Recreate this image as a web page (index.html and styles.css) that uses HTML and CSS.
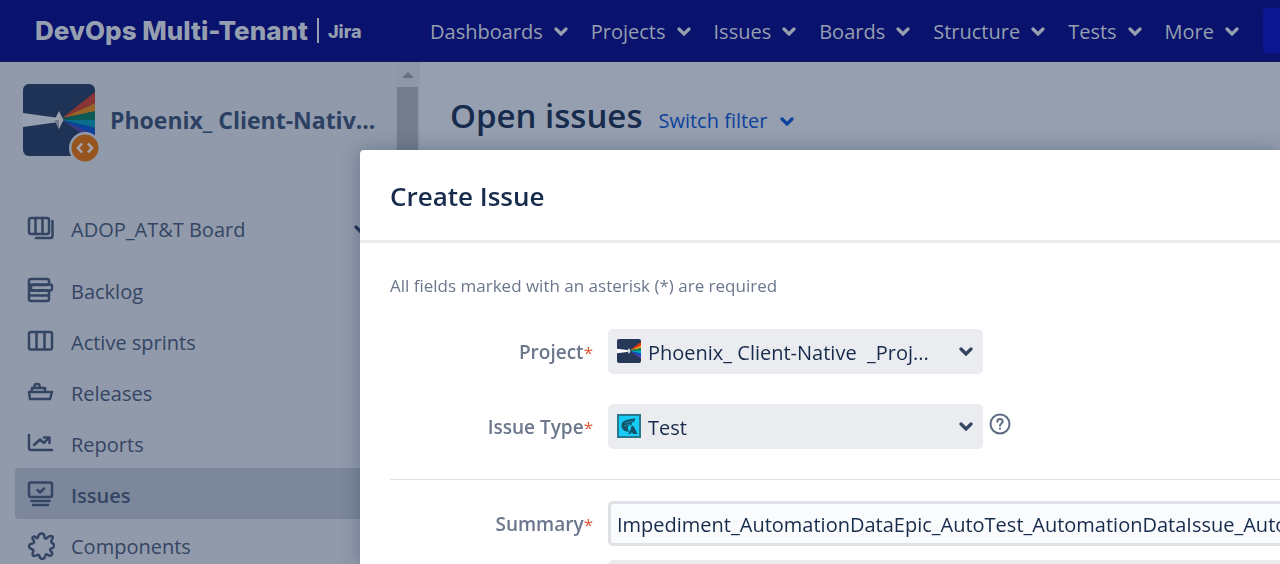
FILE: index.html
```html
<!DOCTYPE html>
<html lang="en">
<head>
<meta charset="utf-8">
<meta name="viewport" content="width=device-width, initial-scale=1">
<title>Create Issue - Jira</title>
<link rel="stylesheet" href="styles.css">
</head>
<body>
<svg class="defs" aria-hidden="true">
  <symbol id="chevron" viewBox="0 0 14 9"><path d="M2 2l5 5 5-5" fill="none" stroke="currentColor" stroke-width="3.200" stroke-linecap="round"/></symbol>
  <symbol id="prism" viewBox="0 0 72 72">
    <rect class="prism-bg" width="72" height="72" rx="6"/>
    <path class="prism-beam" d="M0 29l36 5v4L0 43z"/>
    <path class="prism-red" d="M39 34L72 8v12z"/>
    <path class="prism-orange" d="M39 34l33-14.500v8z"/>
    <path class="prism-green" d="M39 35l33-8v9H39z"/>
    <path class="prism-teal" d="M39 36h33v8z"/>
    <path class="prism-blue" d="M39 36l33 8v8z"/>
    <path class="prism-purple" d="M39 36l33 15v8z"/>
    <path class="prism-gem" d="M36 27l4.500 9-4.500 9-4.500-9z"/>
    <path class="prism-shade" d="M31.500 36H36v9z"/>
  </symbol>
</svg>

<header class="topbar">
  <a class="brand" href="#">
    <span class="brand-name">DevOps Multi-Tenant</span>
    <span class="brand-rule"></span>
    <span class="brand-product">Jira</span>
  </a>
  <nav class="topnav">
    <a href="#">Dashboards<svg class="chevron"><use href="#chevron"/></svg></a>
    <a href="#">Projects<svg class="chevron"><use href="#chevron"/></svg></a>
    <a href="#">Issues<svg class="chevron"><use href="#chevron"/></svg></a>
    <a href="#">Boards<svg class="chevron"><use href="#chevron"/></svg></a>
    <a href="#">Structure<svg class="chevron"><use href="#chevron"/></svg></a>
    <a href="#">Tests<svg class="chevron"><use href="#chevron"/></svg></a>
    <a href="#">More<svg class="chevron"><use href="#chevron"/></svg></a>
  </nav>
  <button class="create" type="button" aria-label="Create"></button>
</header>

<div class="layout">
  <aside class="sidebar">
    <div class="project">
      <div class="avatar">
        <svg class="avatar-img"><use href="#prism"/></svg>
        <svg class="avatar-badge" viewBox="0 0 32 32"><circle cx="16" cy="16" r="16" fill="#919aab"/><circle cx="16" cy="16" r="13.500" fill="#96551f"/><path d="M13 11.500L9 16l4 4.500M19 11.500l4 4.500-4 4.500" fill="none" stroke="#a2a5ae" stroke-width="2.600"/></svg>
      </div>
      <span class="project-name">Phoenix_ Client-Nativ...</span>
    </div>
    <nav class="sidenav">
      <a class="board" href="#">
        <svg class="icon" viewBox="0 0 28 28"><rect x="2" y="2" width="20" height="16" rx="2"/><path d="M8.500 2v16M15.500 2v16M25.500 5v15a2 2 0 0 1-2 2H9"/></svg>
        <span>ADOP_AT&amp;T Board</span>
        <svg class="chevron"><use href="#chevron"/></svg>
      </a>
      <a href="#">
        <svg class="icon" viewBox="0 0 28 28"><rect x="2" y="2" width="20" height="6" rx="2"/><rect x="4" y="7.500" width="21" height="6" rx="2"/><rect x="2" y="13.500" width="20" height="10.500" rx="2"/><path d="M2 7v6M2 18.500h20"/></svg>
        <span>Backlog</span>
      </a>
      <a href="#">
        <svg class="icon" viewBox="0 0 28 28"><rect x="2" y="4" width="23" height="17.500" rx="2"/><path d="M9.500 4v17M17.500 4v17"/></svg>
        <span>Active sprints</span>
      </a>
      <a href="#">
        <svg class="icon" viewBox="0 0 28 28"><path d="M2 13h23l-2 7H3zM5 13V9h13v4M7.500 9V7a2 2 0 0 1 2-2h1a2 2 0 0 1 2 2v2"/></svg>
        <span>Releases</span>
      </a>
      <a href="#">
        <svg class="icon" viewBox="0 0 28 28"><path d="M2 5v13a2 2 0 0 0 2 2h21M7 15l6-5.500 4 3.500 5-5.500M17 7.500h5.500V13"/></svg>
        <span>Reports</span>
      </a>
      <a class="selected" href="#">
        <svg class="icon" viewBox="0 0 28 28"><rect x="2" y="1.500" width="23" height="14.500" rx="2"/><path d="M10.500 9l2.500 2.500L17 7.500M4.500 20h18M6 24h15"/></svg>
        <span>Issues</span>
      </a>
      <a href="#">
        <svg class="icon" viewBox="0 0 28 28"><path d="M11 5C12 .5 17 .5 17.500 4.500C17.500 7 19 7.500 20.500 5.500C22 3.500 27 3 25.500 6.500C23.500 9 24 11 26 11.500C28 13 27 16.500 24 16.500C22.500 17.500 23.500 19 25 20.500C26 23.500 23 24.500 21 23C19 21.500 18.500 22.500 18 24.500C17 28 13.500 27.500 12.500 24.500C12 22 10.500 22.500 9 23.500C6 25 5 23 6 20C7 18 6 17.500 4.500 17C1 15.500 1.500 12 5 11.500C8 11 7.500 9.500 6 7.500C4.500 5 7 3.500 9 5.500C10 6.500 10.500 6.500 11 5z"/></svg>
        <span>Components</span>
      </a>
    </nav>
  </aside>
  <div class="scrollbar" aria-hidden="true"><span class="scroll-arrow"></span><span class="scroll-thumb"></span></div>
  <main class="content">
    <h1>Open issues</h1>
    <a class="switch" href="#">Switch filter<svg class="chevron"><use href="#chevron"/></svg></a>
  </main>
</div>

<div class="overlay">
  <section class="dialog" role="dialog" aria-labelledby="dialog-title">
    <header class="dialog-head"><h2 id="dialog-title">Create Issue</h2></header>
    <form class="form">
      <p class="note">All fields marked with an asterisk (*) are required</p>
      <div class="field">
        <label for="project">Project<span class="req">*</span></label>
        <div class="picker">
          <select id="project"><option>Phoenix_ Client-Native &nbsp;_Proj...</option></select>
          <svg class="picker-icon"><use href="#prism"/></svg>
          <svg class="chevron"><use href="#chevron"/></svg>
        </div>
      </div>
      <div class="field">
        <label for="type">Issue Type<span class="req">*</span></label>
        <div class="picker">
          <select id="type"><option>Test</option></select>
          <svg class="picker-icon" viewBox="0 0 24 24"><rect x="1" y="1" width="22" height="22" fill="#17cdf5" stroke="#28788f" stroke-width="2"/><path d="M4.500 11C5 7 9 5 18.500 4.500L17 8l-2 .5-.5 2.500-3 .5c-1 2-1 4 1 6C8 18 4.500 16 4.500 11zM14.500 12h2l4 8H16l-1-2-1.500 2H11l2.500-4z" fill="#12536a"/><path d="M8 9l8-2M7 12l6-2" stroke="#1893b2"/></svg>
          <svg class="chevron"><use href="#chevron"/></svg>
        </div>
        <button class="help" type="button" aria-label="Help"><svg viewBox="0 0 22 22"><circle cx="11" cy="11" r="9.500"/><path d="M8.300 8.800c0-3.600 5.400-3.600 5.400-.3 0 2-2.700 2-2.700 4.300"/><path d="M11 15.500v.2"/></svg></button>
      </div>
      <hr>
      <div class="field summary">
        <label for="summary">Summary<span class="req">*</span></label>
        <input id="summary" type="text" value="Impediment_AutomationDataEpic_AutoTest_AutomationDataIssue_Auto">
      </div>
      <div class="next-field"></div>
    </form>
  </section>
</div>
</body>
</html>
```
FILE: styles.css
```css
* { box-sizing: border-box; }
body {
  margin: 0;
  height: 100vh;
  display: flex;
  flex-direction: column;
  overflow: hidden;
  background: #969fb0;
  color: #172b4d;
  font: 20px/28px "Open Sans", "Noto Sans", sans-serif;
}
a { color: inherit; text-decoration: none; }
h1, h2, p { margin: 0; }
.defs { position: absolute; width: 0; height: 0; }
.chevron { width: 14px; height: 9px; flex: none; }

.prism-bg { fill: var(--prism-bg, #253858); }
.prism-beam { fill: var(--prism-beam, #fff); }
.prism-red { fill: var(--prism-red, #de350b); }
.prism-orange { fill: var(--prism-orange, #ff991f); }
.prism-green { fill: var(--prism-green, #00875a); }
.prism-teal { fill: var(--prism-teal, #00a3bf); }
.prism-blue { fill: var(--prism-blue, #0052cc); }
.prism-purple { fill: var(--prism-purple, #5243aa); }
.prism-gem { fill: var(--prism-gem, #dfe1e6); }
.prism-shade { fill: var(--prism-shade, #b3bac5); }

.topbar {
  flex: none;
  display: flex;
  align-items: center;
  height: 62px;
  padding-left: 35px;
  background: #09126c;
  border-bottom: 1px solid #14195c;
  color: #969fb0;
  white-space: nowrap;
}
.brand { display: flex; align-items: center; flex: none; width: 395px; font-family: Inter, sans-serif; font-weight: 800; }
.brand-name { font-size: 26px; }
.brand-rule { width: 2px; height: 25px; margin: 0 9px; background: #969fb0; }
.brand-product { padding-top: 2px; font-size: 18px; }
.topnav { display: flex; flex: none; gap: 23px; padding-top: 2px; }
.topnav a { display: flex; align-items: center; gap: 11px; }
.create { flex: 1; min-width: 0; height: 45px; margin-left: 24px; border: 0; border-radius: 4px 0 0 4px; background: #0c1793; }

.layout { flex: 1; display: flex; min-height: 0; overflow: hidden; }
.sidebar { flex: none; width: 395px; padding-top: 22px; background: #919aab; color: #344563; }
.project { display: flex; align-items: center; gap: 15px; padding-left: 23px; }
.avatar { position: relative; flex: none; width: 72px; height: 72px; }
.avatar-img {
  --prism-bg: #1e3355;
  --prism-beam: #969fb0;
  --prism-red: #873534;
  --prism-orange: #976428;
  --prism-green: #0b5c55;
  --prism-teal: #0b6d8d;
  --prism-blue: #0c429b;
  --prism-purple: #3a3b85;
  --prism-gem: #9aa1af;
  --prism-shade: #707a8e;
  display: block;
  width: 72px;
  height: 72px;
}
.avatar-badge { position: absolute; right: -6px; bottom: -8px; width: 32px; height: 32px; }
.project-name { font-size: 23px; font-weight: 700; color: #2b4062; }
.sidenav { display: flex; flex-direction: column; padding: 48px 15px 0; }
.sidenav a { display: flex; align-items: center; gap: 16px; height: 51px; padding: 2px 12px 0; border-radius: 4px; }
.sidenav a span { padding-top: 2px; }
.sidenav .board { margin-bottom: 9px; padding-top: 0; }
.sidenav .board span { padding-top: 0; }
.sidenav .chevron { margin-left: auto; color: #253858; }
.sidenav .selected { background: #7c879b; font-weight: 600; }
.icon { width: 28px; height: 28px; flex: none; fill: none; stroke: #344563; stroke-width: 2.500; stroke-linecap: round; stroke-linejoin: round; }

.scrollbar { flex: none; width: 25px; padding: 10px 2px 0; background: #8f98a9; display: flex; flex-direction: column; align-items: center; gap: 9px; }
.scroll-arrow { border: 6px solid transparent; border-top: 0; border-bottom-color: #667185; }
.scroll-thumb { flex: 1; width: 21px; background: #747d8e; }

.content { flex: 1; display: flex; align-items: baseline; gap: 16px; padding: 30px 0 0 30px; white-space: nowrap; }
h1 { font-size: 33px; line-height: 48px; font-weight: 600; }
.switch { display: flex; align-items: center; gap: 12px; color: #0c429b; }

.overlay { position: fixed; inset: 0; padding: 150px 0 0 360px; overflow: hidden; }
.dialog { height: 100%; overflow: hidden; background: #fff; border-radius: 4px 0 0 0; box-shadow: 0 0 20px rgba(9, 30, 66, .3); }
.dialog-head { padding: 32px 30px 30px; border-bottom: 3px solid #ebecf0; }
h2 { font-size: 26px; line-height: 28px; font-weight: 600; }
.form { padding: 30px 0 0 30px; }
.note { margin-bottom: 30px; font-size: 17px; line-height: 26px; color: #6b778c; }
.field { display: flex; align-items: center; margin-bottom: 30px; }
.field label { flex: none; width: 203px; margin-right: 15px; padding-top: 2px; text-align: right; font-size: 19px; font-weight: 600; color: #6b778c; }
.req { color: #e0532f; font-size: 17px; font-weight: 400; }
.picker { position: relative; width: 375px; flex: none; }
.picker select { display: block; width: 100%; height: 45px; padding: 2px 40px 0; border: 0; border-radius: 5px; appearance: none; background: #ebecf0; color: #172b4d; font: inherit; }
.picker-icon { position: absolute; left: 9px; top: 10px; width: 24px; height: 24px; pointer-events: none; }
.picker .chevron { position: absolute; right: 10px; top: 18px; color: #344563; pointer-events: none; }
.help { margin: 0 0 6px 6px; padding: 0; border: 0; background: none; }
.help svg { display: block; width: 22px; height: 22px; fill: none; stroke: #5e6c84; stroke-width: 2; stroke-linecap: round; }
hr { margin: 0 0 21px; border: 0; border-top: 1px solid #dfe1e6; }
.summary { margin-bottom: 14px; }
.summary input { flex: 1; min-width: 0; height: 45px; padding: 2px 0 0 6px; border: 3px solid #dfe1e6; border-right: 0; border-radius: 5px 0 0 5px; background: #fafbfc; color: #172b4d; font: inherit; }
.next-field { height: 60px; margin-left: 218px; border-radius: 5px 0 0 0; background: #ebecf0; }
```
